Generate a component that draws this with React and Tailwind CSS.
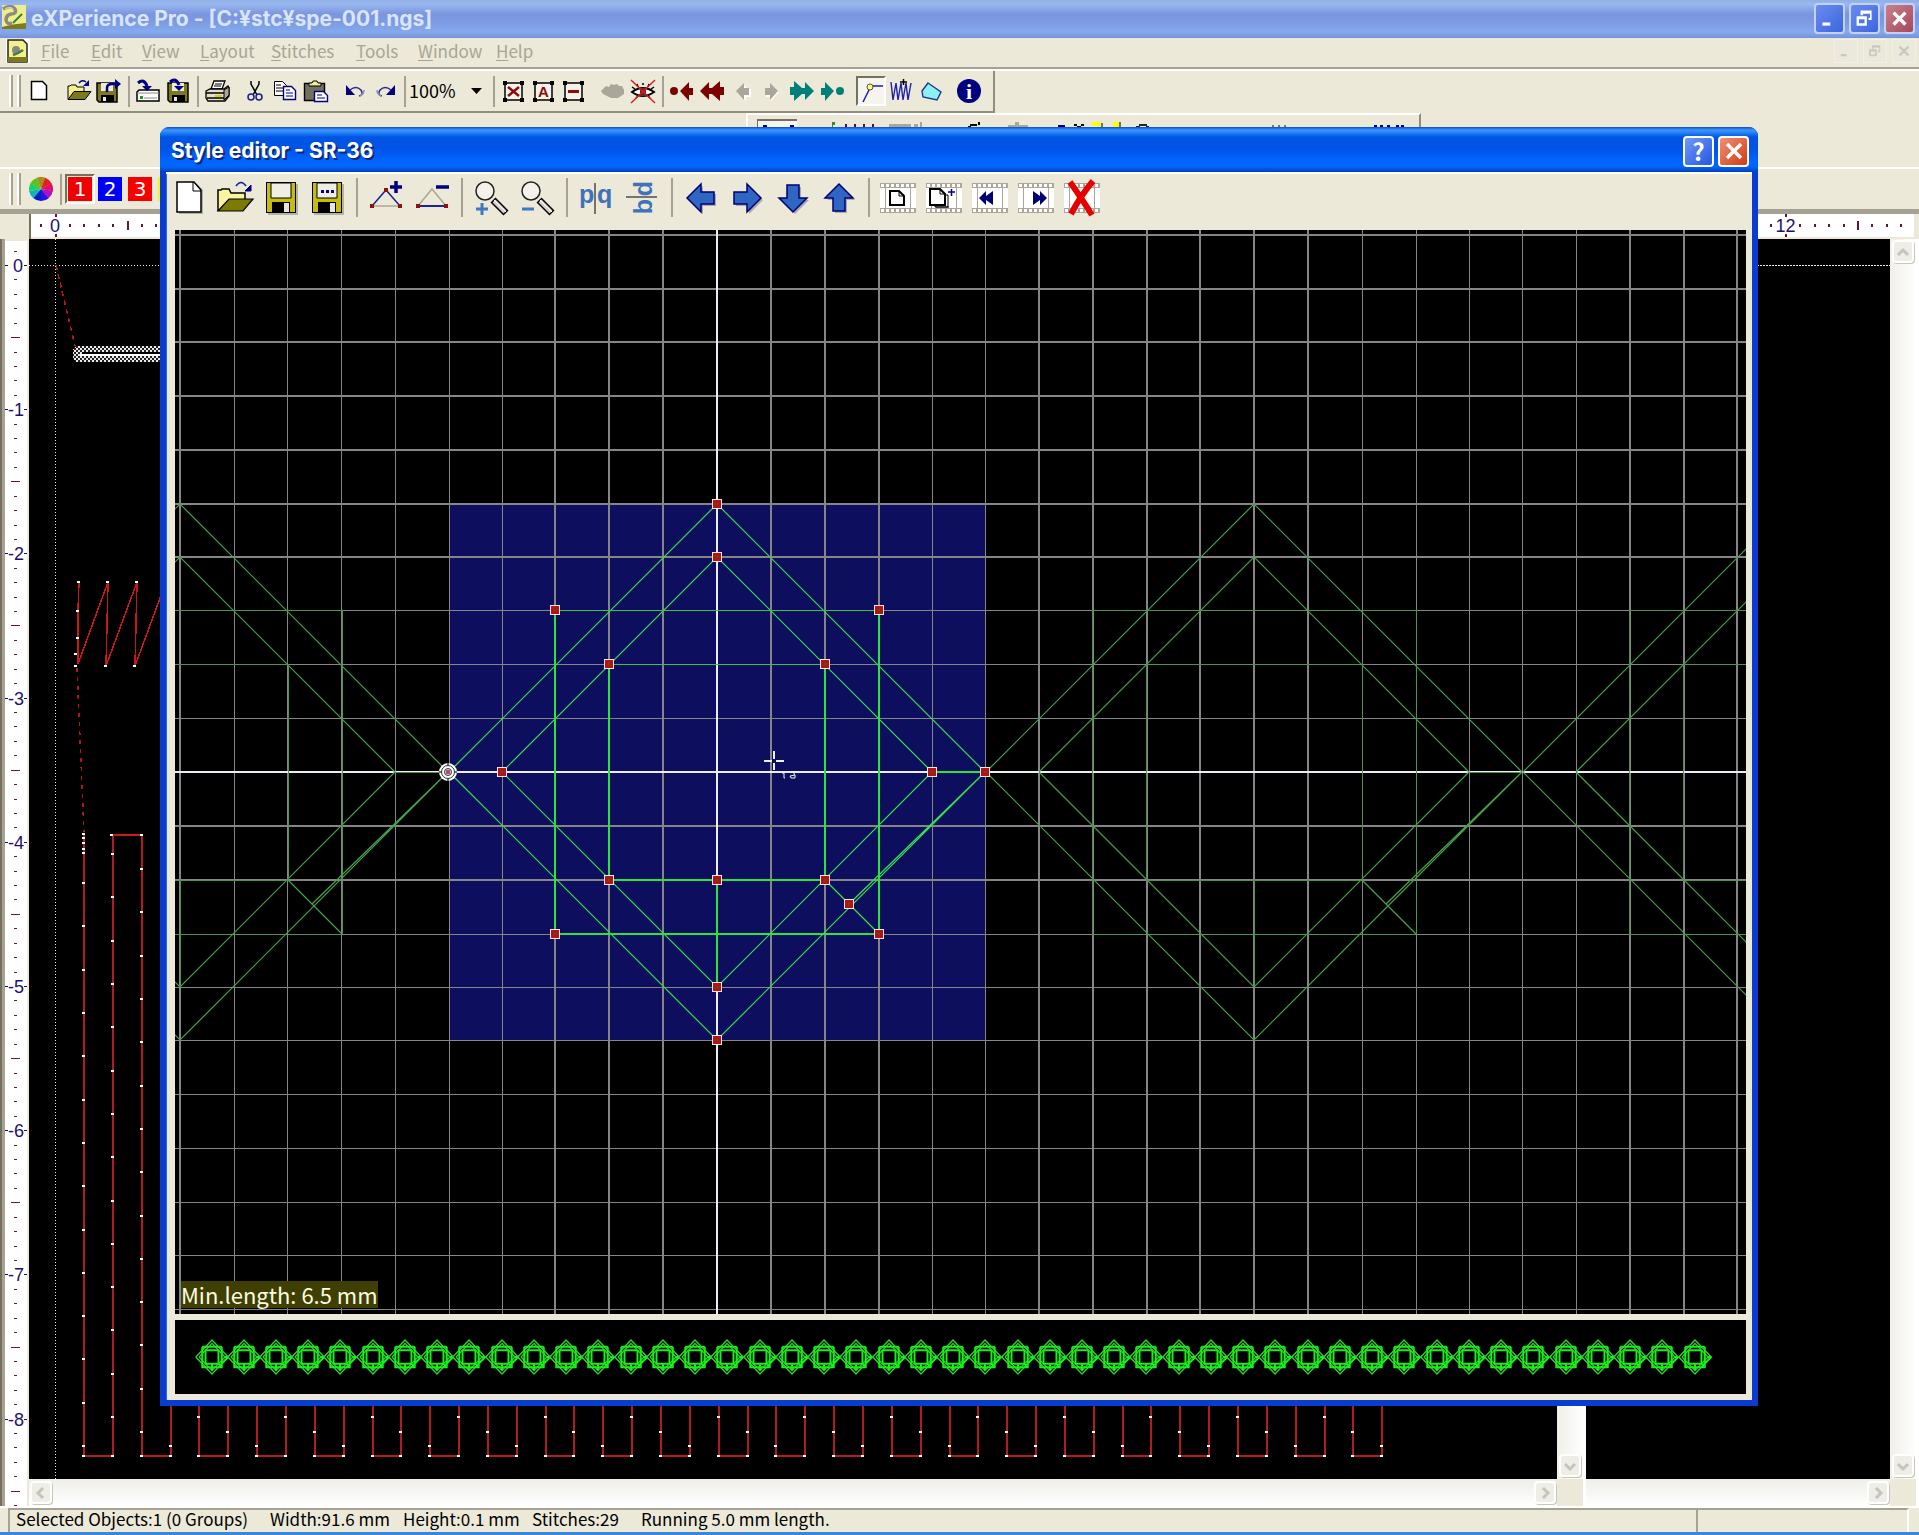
import React from "react";

const UI = "font-['Noto_Sans_CJK_JP','Noto_Sans',sans-serif]";

/* ---------- main toolbar icons (30 x 30 boxes) ---------- */

function Ico({ children }) {
  return (
    <svg viewBox="0 0 30 30" className="h-[30px] w-[30px]" fill="none" aria-hidden="true">
      {children}
    </svg>
  );
}

const Floppy = ({ y = 7 }) => (
  <g>
    <path d={`M3 ${y}h20v19h-18l-2-2z`} fill="#7c7a1c" stroke="#000" strokeWidth="1.5" />
    <path d={`M7 ${y}h12v8h-12z`} fill="#eceadf" />
    <path d={`M7 ${y + 12}h13v7h-13z`} fill="#000" />
    <path d={`M9 ${y + 14}h3v4h-3z`} fill="#e8e8e8" />
  </g>
);

const HandleBox = ({ children }) => (
  <g>
    <path d="M7 7h17v17h-17z" fill="#f6f2ea" stroke="#000" strokeWidth="1.5" />
    <path d="M5 5h4v4h-4zM22 5h4v4h-4zM5 22h4v4h-4zM22 22h4v4h-4z" fill="#000" />
    {children}
  </g>
);

const mainIcons = {
  New: <path d="M7.5 5.5h11l4 4v14h-15z" fill="#fff" stroke="#000" strokeWidth="1.5" />,
  Open: (
    <g>
      <path d="M4 23V10h2l1-1h5l1 2h7v4" fill="#f4f08a" stroke="#000" strokeWidth="1" />
      <path d="M4 23.500l6-8h17l-6 8z" fill="#7c7a1c" stroke="#000" strokeWidth="1" />
      <path d="M15 7q3-4 7-1" stroke="#000080" strokeWidth="1.3" />
      <path d="M25 4v6h-6z" fill="#000080" />
    </g>
  ),
  Export: (
    <g>
      <Floppy />
      <path d="M13 16v-4q0-4 5-4h3" stroke="#000080" strokeWidth="2.500" />
      <path d="M21 3l6 5-6 5z" fill="#000080" />
    </g>
  ),
  "Read from card": (
    <g>
      <path d="M4 16l2-2h20v11h-22z" fill="#fff" stroke="#000" strokeWidth="1.500" />
      <path d="M4 17h22M11 22h13" stroke="#888" />
      <path d="M7 20h3v3h-3z" fill="#1c9a1c" />
      <path d="M5 7q6-5 9 3" stroke="#000080" strokeWidth="3" />
      <path d="M9 10h10l-5 5z" fill="#000080" />
    </g>
  ),
  "Write to card": (
    <g>
      <path d="M5 7h20v19h-18l-2-2z" fill="#7c7a1c" stroke="#000" strokeWidth="1.500" />
      <path d="M9 7h12v8h-12z" fill="#eceadf" />
      <path d="M9 19h13v7h-13z" fill="#000" />
      <path d="M11 21h3v4h-3z" fill="#e8e8e8" />
      <path d="M7 6q6-5 9 3" stroke="#000080" strokeWidth="3" />
      <path d="M11 10h10l-5 5z" fill="#000080" />
    </g>
  ),
  Print: (
    <g stroke="#000" strokeWidth="1.300">
      <path d="M9 13l3-8h11l-3 8z" fill="#fff" />
      <path d="M13 8h7M12 10h7" strokeWidth="1" />
      <path d="M4 15l4-2h14l4-3 1 2v8l-4 5h-17l-2-3z" fill="#e2dfd0" />
      <path d="M4 17h18l4-4M5 22h18l3-4" />
      <path d="M13 20h7" stroke="#d8d000" strokeWidth="2" />
      <path d="M22 14l5-3v8l-5 5z" fill="#aaa79a" strokeWidth="1" />
    </g>
  ),
  Cut: (
    <g>
      <path d="M11 5v3l6 11M19 5v3l-6 11" stroke="#000" strokeWidth="1.500" />
      <circle cx="11" cy="21" r="3" stroke="#1c1c90" strokeWidth="1.500" />
      <circle cx="19" cy="21" r="3" stroke="#1c1c90" strokeWidth="1.500" />
    </g>
  ),
  Copy: (
    <g>
      <path d="M4.500 5.500h8l4 4v10h-12z" fill="#fff" stroke="#000" />
      <path d="M6 9h5M6 12h7M6 15h7" stroke="#000" />
      <path d="M13.500 10.500h8l4 4v9h-12z" fill="#fff" stroke="#000080" strokeWidth="1.400" />
      <path d="M16 14h4M16 17h7M16 20h7" stroke="#000080" />
    </g>
  ),
  Paste: (
    <g>
      <path d="M4.500 7.500h20v17h-20z" fill="#73715e" stroke="#000" strokeWidth="1.400" />
      <path d="M9 10v-3h3l1-2h4l1 2h3v3z" fill="#f0ec9a" stroke="#000" />
      <path d="M14.500 15.500h9l4 4v6h-13z" fill="#fff" stroke="#000080" strokeWidth="1.400" />
      <path d="M17 19h5M17 22h8" stroke="#000080" />
    </g>
  ),
  Undo: (
    <g>
      <path d="M6 9v10h9z" fill="#000080" />
      <path d="M10 14q6-5 11 0q3 5-2 6" stroke="#2a2a98" strokeWidth="1.500" />
      <path d="M20 20q4-2 4-6" stroke="#8f8fa8" strokeWidth="1.500" />
    </g>
  ),
  Redo: (
    <g>
      <path d="M25 9v10h-9z" fill="#000080" />
      <path d="M21 14q-6-5-11 0q-3 5 2 6" stroke="#2a2a98" strokeWidth="1.500" />
      <path d="M11 20q-4-2-4-6" stroke="#8f8fa8" strokeWidth="1.500" />
    </g>
  ),
  "Delete objects": (
    <HandleBox>
      <path d="M10 11l11 9M21 11l-11 9" stroke="#8c0c0c" strokeWidth="2.500" />
    </HandleBox>
  ),
  "Select all": (
    <HandleBox>
      <text x="15.500" y="21" textAnchor="middle" fill="#8c0c0c" className="font-['Liberation_Sans',sans-serif] text-[15px] font-bold">A</text>
    </HandleBox>
  ),
  "Deselect": (
    <HandleBox>
      <path d="M10 15.500h11" stroke="#8c0c0c" strokeWidth="3" />
    </HandleBox>
  ),
  Hide: <path d="M3 15l2-2 3-3 3 1 2-3 3 1 3-1 2 2 3 0 2 4v4l-3 2-3 2h-7l-4-2-4-2z" fill="#aaa79a" />,
  "Show all": (
    <g>
      <path d="M4 16q11-8 22 0q-11 8-22 0z" fill="#fff" stroke="#000" strokeWidth="2" />
      <path d="M4 11l3 2M9 8l1 3M15 7v2M21 8l-1 3M26 11l-3 2M8 22l2-2M22 22l-2-2" stroke="#000" strokeWidth="1.500" />
      <path d="M12 12h6v8h-6z" fill="#6a2828" />
      <path d="M3 4l24 23M27 4l-24 23" stroke="#e01818" strokeWidth="1.400" />
    </g>
  ),
  First: <path d="M3 15a4 4 0 1 0 8 0a4 4 0 1 0-8 0M13 15l9-9v6h4v7h-4v6z" fill="#7c0000" />,
  "Fast back": <path d="M3 15l9-9v6h3l8-7v6h4v8h-4v6l-8-7h-3v6z" fill="#7c0000" />,
  Back: (
    <g>
      <path d="M11 16l8-7v4h5v8h-5v4z" fill="#fff" />
      <path d="M9 15l8-8v5h5v7h-5v5z" fill="#aaa79a" />
    </g>
  ),
  Forward: (
    <g>
      <path d="M22 16l-8-7v4h-5v8h5v4z" fill="#fff" />
      <path d="M21 15l-8-8v5h-5v7h5v5z" fill="#aaa79a" />
    </g>
  ),
  "Fast forward": <path d="M27 15l-9-9v6h-3l-8-7v6h-4v8h4v6l8-7h3v6z" fill="#008078" />,
  Last: <path d="M19 15a4 4 0 1 0 8 0a4 4 0 1 0-8 0M17 15l-9-9v6h-4v7h4v6z" fill="#008078" />,
  "Edit points": (
    <g>
      <path d="M7 26l8-16M14 10h13" stroke="#1818c8" strokeWidth="1.500" />
      <circle cx="14" cy="11" r="3" fill="#ffff88" stroke="#55552a" />
    </g>
  ),
  Stitches: (
    <g>
      <path d="M5 6l2 18 3-17 2 17 3-17 2 17 3-17 2 17 3-17" stroke="#2020a8" strokeWidth="1.400" />
      <path d="M14 6h7M17.500 3v6" stroke="#000" strokeWidth="1.500" />
    </g>
  ),
  Fill: <path d="M12 7l13 9-4 8-14-3-1-6z" fill="#8ff0f4" stroke="#1a3a90" strokeWidth="1.400" />,
  Info: (
    <g>
      <circle cx="15" cy="15" r="12" fill="#000080" />
      <text x="15" y="23" textAnchor="middle" fill="#fff" className="font-['Liberation_Serif',serif] text-[22px] font-bold">i</text>
    </g>
  ),
};

const mainGroups = [
  { names: ["New"], after: "w-[10px]" },
  { names: ["Open", "Export"], after: "sep" },
  { names: ["Read from card", "Write to card"], after: "sep" },
  { names: ["Print"], after: "w-2" },
  { names: ["Cut", "Copy", "Paste"], after: "w-[10px]" },
  { names: ["Undo", "Redo"], after: "sep" },
  { zoom: true, names: [], after: "sep" },
  { names: ["Delete objects", "Select all", "Deselect"], after: "w-[10px]" },
  { names: ["Hide", "Show all"], after: "sep" },
  { names: ["First", "Fast back", "Back", "Forward", "Fast forward", "Last"], after: "w-[9px]" },
  { names: ["Edit points", "Stitches", "Fill"], after: "w-2" },
  { names: ["Info"], after: "w-2" },
];

function Grip() {
  return (
    <div className="flex h-8 gap-[4px] pl-[9px]">
      <div className="w-[4px] border-l-2 border-r-2 border-l-white border-r-[#a5a294]" />
      <div className="w-[4px] border-l-2 border-r-2 border-l-white border-r-[#a5a294]" />
    </div>
  );
}

function Sep() {
  return (
    <div className="flex w-[9px] justify-center">
      <div className="h-[31px] w-[2px] bg-[#a5a294]" />
    </div>
  );
}

function MainToolbar() {
  return (
    <div className="flex h-[42px] w-[995px] items-center border-r-2 border-b-2 border-[#8f8c80] border-t-0 border-solid">
      <Grip />
      <div className="w-[3px]" />
      {mainGroups.map((g, i) => (
        <React.Fragment key={i}>
          {g.zoom && (
            <div className="relative flex w-20 items-center">
              <select aria-label="Zoom" className={`${UI} -mt-[2px] h-8 w-full appearance-none bg-transparent text-lg leading-8 text-black`}>
                <option>100%</option>
              </select>
              <svg viewBox="0 0 11 6" className="pointer-events-none absolute right-[7px] h-[6px] w-[11px]">
                <path d="M0 0h11l-5.500 6z" fill="#000" />
              </svg>
            </div>
          )}
          {g.names.map((n) => (
            <button
              key={n}
              aria-label={n}
              className={
                n === "Edit points"
                  ? "h-[30px] w-[30px] border-2 border-t-[#73715e] border-l-[#73715e] border-r-white border-b-white bg-[#f6f4ee] [&>svg]:-m-[2px]"
                  : "h-[30px] w-[30px]"
              }
            >
              <Ico>{mainIcons[n]}</Ico>
            </button>
          ))}
          {g.after === "sep" ? <Sep /> : <div className={g.after} />}
        </React.Fragment>
      ))}
    </div>
  );
}

/* Toolbar whose upper rim shows above the dialog */
function StitchToolbar() {
  return (
    <div className="ml-[746px] h-full w-[675px] border-t-2 border-l-2 border-r-2 border-t-white border-l-white border-r-[#8f8c80]">
      <svg width="671" height="30" shapeRendering="crispEdges">
        <g transform="translate(-748 -115)">
          <path d="M757 119h40v12h-40z" fill="#f6f4ee" />
          <path d="M757 119h40v2h-39v10h-1z" fill="#73715e" />
          <path d="M763 125h4v3h-4zM790 125h4v3h-4zM1058 125h7v3h-7z" fill="#000080" />
          <path d="M832 122h3v3h-2v4h-1z" fill="#3a8a1a" />
          <path d="M845 124h2v4h-2zM854 124h2v4h-2zM863 124h2v4h-2zM872 124h2v4h-2z" fill="#600060" />
          <path d="M889 124h22v4h-22zM914 124h4v4h-4zM920 122h2v6h-2zM1008 125h20v3h-20zM1015 122h4v4h-4z" fill="#aaa79a" />
          <path d="M970 124h7v2h-7zM968 126h3v2h-3zM978 122h2v3h-2zM1074 124h3v2h-3zM1081 124h3v2h-3zM1077 126h4v2h-4z" fill="#000" />
          <path d="M1092 122h9v4h-9zM1113 122h6v5h-6z" fill="#ff0" />
          <path d="M1101 123h2v5h-2zM1119 122h2v6h-2z" fill="#73715e" />
          <path d="M1139 124h8v2h-8zM1136 126h4v2h-4zM1146 126h3v2h-3z" fill="#223" />
          <path d="M1272 125h2v3h-2zM1278 125h2v3h-2zM1284 125h2v3h-2z" fill="#777" />
          <path d="M1374 125h3v3h-3zM1380 125h3v3h-3zM1387 125h3v3h-3zM1396 125h3v3h-3zM1401 125h3v3h-3z" fill="#0000a0" />
        </g>
      </svg>
    </div>
  );
}

function ColorWheel() {
  const colors = ["#b08818", "#e02020", "#e0106a", "#b010c0", "#3010e0", "#0020c0", "#10b0c0", "#20d060", "#60c020"];
  return (
    <svg viewBox="-12 -12 24 24" className="h-6 w-6" aria-hidden="true">
      {colors.map((c, i) => {
        const a = ((i * 40 - 110) * Math.PI) / 180;
        const b = ((i * 40 - 69) * Math.PI) / 180;
        return (
          <path
            key={c}
            fill={c}
            d={`M0 0L${12 * Math.cos(a)} ${12 * Math.sin(a)}A12 12 0 0 1 ${12 * Math.cos(b)} ${12 * Math.sin(b)}Z`}
          />
        );
      })}
    </svg>
  );
}

function ColorToolbar() {
  const digit = "flex h-6 w-6 items-center justify-center font-['DejaVu_Sans',sans-serif] text-xl leading-6 text-white";
  return (
    <div className="flex h-[42px] items-center border-t-2 border-white">
      <Grip />
      <div className="w-2" />
      <button aria-label="Colors" className="flex w-6">
        <ColorWheel />
      </button>
      <div className="w-[3px]" />
      <Sep />
      <button className="mr-[3px] border-2 border-t-[#73715e] border-l-[#73715e] border-r-white border-b-white p-px">
        <span className={`${digit} bg-[#f00000]`}>1</span>
      </button>
      <button className={`${digit} mr-[6px] bg-[#0000f8]`}>2</button>
      <button className={`${digit} mr-[6px] bg-[#f80000]`}>3</button>
      <button className={`${digit} bg-[#f8f800]`}>4</button>
    </div>
  );
}

/* ---------- document window ---------- */

const STEP = 144.2;

function HRuler() {
  const ticks = [];
  for (let i = -1; i < 130; i++) ticks.push(i);
  return (
    <svg className="h-[23px] w-full bg-white" shapeRendering="crispEdges">
      {ticks.map((i) => {
        const x = Math.round(24.5 + (i * STEP) / 10);
        if (i % 10 === 0) return <path key={i} d={`M${x} 0v3M${x} 20v3`} stroke="#701030" strokeWidth="2" />;
        return <path key={i} d={i % 5 === 0 ? `M${x} 7v9` : `M${x} 10v3`} stroke="#601838" strokeWidth="2" />;
      })}
      {Array.from({ length: 13 }, (_, n) => (
        <text key={n} x={24 + n * STEP} y="18" textAnchor="middle" fill="#20106c" className="font-['Liberation_Sans',sans-serif] text-lg">
          {n}
        </text>
      ))}
    </svg>
  );
}

function VRuler() {
  const ticks = [];
  for (let i = -1; i < 87; i++) ticks.push(i);
  return (
    <svg className="absolute inset-0 h-full w-full bg-white" shapeRendering="crispEdges">
      {ticks.map((i) => {
        const y = Math.round(24 + (i * STEP) / 10);
        if (i % 10 === 0) return <path key={i} d={`M0 ${y}h3M19 ${y}h3`} stroke="#20106c" strokeWidth="1" />;
        return <path key={i} d={i % 5 === 0 ? `M6 ${y + 0.5}h9` : `M9 ${y + 0.5}h3`} stroke="#601838" />;
      })}
      {Array.from({ length: 9 }, (_, n) => (
        <text key={n} x={n ? 11 : 13} y={31 + n * STEP} textAnchor="middle" fill="#20106c" className="font-['Liberation_Sans',sans-serif] text-lg">
          {n ? `-${n}` : "0"}
        </text>
      ))}
    </svg>
  );
}

const arrowPaths = {
  up: "M6 14l5-5 5 5",
  down: "M6 9l5 5 5-5",
  left: "M13 6l-5 5 5 5",
  right: "M9 6l5 5-5 5",
};

function ScrollButton({ dir }) {
  return (
    <button aria-label={`Scroll ${dir}`} className="h-[23px] w-[22px] shrink-0 rounded-sm border-2 border-white bg-[#eeede6] shadow-[1px_1px_0_#c9c7ba]">
      <svg viewBox="0 0 22 22" className="-m-[2px] h-[22px] w-[22px]" fill="none">
        <path d={arrowPaths[dir]} stroke="#c6c4bb" strokeWidth="3" />
      </svg>
    </button>
  );
}

function Pane({ className, children, secondary }) {
  return (
    <div className={`flex flex-col ${className}`}>
      <div className="flex flex-1">
        <div className="relative flex-1 overflow-hidden bg-black">{children}</div>
        <div className="flex w-[29px] flex-col justify-between border-r-[3px] border-white bg-[linear-gradient(90deg,#f0efe9,#fff)] pt-px pb-[2px] pl-[2px]">
          <ScrollButton dir="up" />
          <ScrollButton dir="down" />
        </div>
      </div>
      <div className="flex h-[27px]">
        <div className="flex flex-1 items-start justify-between bg-[linear-gradient(180deg,#efeee8,#fff)] px-[1px] pt-[2px]">
          {secondary ? <span /> : <ScrollButton dir="left" />}
          <ScrollButton dir="right" />
        </div>
        <div className="w-[29px] border-r-[3px] border-white bg-[#ece9d8]" />
      </div>
    </div>
  );
}

const PHASE = [1446, 1417, 1432];

function Embroidery() {
  const cols = Array.from({ length: 46 }, (_, n) => ({
    n,
    x: Math.round(84 + n * 28.85),
    top: n === 0 || n === 1 || n === 2 ? 835 : 1390,
  }));
  const dots = [];
  cols.forEach(({ n, x, top }) => {
    for (let k = 0; k < 14; k++) {
      const y = Math.round(PHASE[n % 3] - k * 43.3);
      if (y > top + 12) dots.push([x, y]);
    }
    dots.push([x, 1456]);
  });
  [[84, 834], [84, 838], [84, 843], [84, 849], [84, 853], [112, 835], [142, 835]].forEach((d) => dots.push(d));
  [[79, 582], [108, 582], [137, 582], [78, 611], [78, 638], [76, 654], [76, 666], [106, 666], [135, 666]].forEach((d) => dots.push(d));
  return (
    <svg className="absolute inset-0 h-full w-full" fill="none" shapeRendering="crispEdges">
      <defs>
        <pattern id="checker" width="4" height="4" patternUnits="userSpaceOnUse">
          <rect width="4" height="4" fill="#222" />
          <path d="M0 0h2v2h-2zM2 2h2v2h-2z" fill="#e8e8e8" />
        </pattern>
      </defs>
      <g transform="translate(-29 -239)">
        <path d="M55.500 239V1479" stroke="#e8e8e8" strokeDasharray="1 2" />
        <path d="M29 265.500H1600" stroke="#e8e8e8" strokeDasharray="1 2" />
        <path d="M56 265L75 346" stroke="#b01818" strokeWidth="1.500" strokeDasharray="5 4" />
        <path d="M76 346H200V362H76L73 358V350Z" fill="url(#checker)" />
        <path d="M82 353H200" stroke="#000" strokeWidth="3" />
        <path d="M80 354.500H200" stroke="#fff" strokeWidth="2" />
        <path d="M79 582L78 611V664L108 582L106 666L137 582L135 666L166 582" stroke="#c81818" strokeWidth="1.500" />
        <path d="M77 668L84 832" stroke="#b01818" strokeWidth="1.500" strokeDasharray="4 5" />
        {cols.map(({ n, x, top }) => (
          <path
            key={n}
            d={`M${x} ${top}V1456${n % 2 === 0 ? `H${Math.round(84 + (n + 1) * 28.85)}` : ""}`}
            stroke="#b01c20"
            strokeWidth="2"
          />
        ))}
        <path d="M112 835H142" stroke="#d01818" strokeWidth="2" />
        {dots.map(([x, y], i) => (
          <path key={i} d={`M${x - 2} ${y - 1}h3v2h-3z`} fill="#fff" />
        ))}
      </g>
    </svg>
  );
}

function DocumentWindow() {
  return (
    <main className="flex flex-1 flex-col border-t-[5px] border-[#a5a294]">
      <div className="flex h-[25px]">
        <div className="ml-[2px] w-[29px] border-r-2 border-[#73715e] bg-[#ece9d8]" />
        <div className="flex-1 pr-[5px]">
          <HRuler />
        </div>
      </div>
      <div className="flex flex-1">
        <div className="flex w-[29px] border-l-2 border-[#73715e] bg-[#ece9d8]">
          <div className="w-[3px] bg-[#a5a294]" />
          <div className="relative mt-[2px] w-[22px]">
            <VRuler />
          </div>
        </div>
        <Pane className="flex-1">
          <Embroidery />
        </Pane>
        <Pane className="w-[333px]" secondary>
          <svg className="absolute inset-0 h-full w-full" shapeRendering="crispEdges">
            <path d="M0 26.500H400" stroke="#e8e8e8" strokeDasharray="2 1" />
          </svg>
        </Pane>
      </div>
    </main>
  );
}

/* ---------- style editor ---------- */

const CX = 717;
const CY = 772;
const SNAP = [0, 54, 108, 162, 215, 268.6];

/* distance of a grid coordinate from the centre, snapped to whole pixels */
function offset(u) {
  const a = Math.abs(u);
  const block = Math.floor(a / 5);
  const rest = a - block * 5;
  const i = Math.floor(rest);
  const d = block * 268.6 + SNAP[i] + (rest - i) * (SNAP[i + 1] - SNAP[i]);
  return Math.sign(u) * Math.floor(d);
}
const gx = (u) => CX + offset(u);
const gy = (u) => CY + offset(u);
const poly = (pts) => "M" + pts.map(([a, b]) => `${gx(a)} ${gy(b)}`).join("L");

const DIAGONALS = [
  [[-5, 0], [0, -5], [5, 0], [0, 5], [-5, 0]],
  [[-4, 0], [0, -4], [4, 0], [0, 4], [-4, 0]],
  [[2, 2], [3, 3]],
  [[2.45, 2.45], [5, 0]],
];
const THIN = [
  [[-3, -3], [3, -3]],
  [[-2, -2], [2, -2]],
];
const THICK = [
  [[-3, -3], [-3, 3], [3, 3], [3, -3]],
  [[-2, -2], [-2, 2], [2, 2], [2, -2]],
  [[0, 2], [0, 4]],
  [[4, 0], [5, 0]],
];
const NODES = [
  [0, -5], [0, -4], [-3, -3], [3, -3], [-2, -2], [2, -2], [-4, 0], [4, 0], [5, 0],
  [-2, 2], [0, 2], [2, 2], [2.45, 2.45], [-3, 3], [3, 3], [0, 4], [0, 5],
];
const V_THICK = [-10, -3, -2, -1, 1, 2, 3, 6, 7, 8, 9, 10, 11, 17, 18, 19];
const H_THICK = [-10, -9, -8, -7, -6, -5, -4, 1, 2];

function Motif({ bright }) {
  return (
    <g>
      <path d={DIAGONALS.map(poly).join("")} stroke={bright ? "#38e04c" : "#48a04c"} strokeWidth="1.200" shapeRendering="auto" />
      <path d={THIN.map(poly).join("")} stroke={bright ? "#38c050" : "#48984c"} strokeWidth="1" />
      <path d={THICK.map(poly).join("")} stroke={bright ? "#28e43c" : "#48984c"} strokeWidth={bright ? 2 : 1} />
    </g>
  );
}

function StyleCanvas() {
  const vs = Array.from({ length: 30 }, (_, i) => i - 10);
  const hs = Array.from({ length: 21 }, (_, i) => i - 10);
  return (
    <svg viewBox="175 230 1571 1084" preserveAspectRatio="xMidYMid slice" className="absolute inset-0 h-full w-full" fill="none" shapeRendering="crispEdges">
      <rect x={gx(-5)} y={gy(-5)} width={gx(5) - gx(-5)} height={gy(5) - gy(-5)} fill="#0e0e5e" />
      {vs.map((i) => (
        <path key={i} d={`M${gx(i)} 230V1314`} stroke="#858585" strokeWidth={V_THICK.includes(i) ? 2 : 1} />
      ))}
      {hs.map((i) => (
        <path key={i} d={`M175 ${gy(i)}H1746`} stroke="#858585" strokeWidth={H_THICK.includes(i) ? 2 : 1} />
      ))}
      <path d="M717 230V1314M175 772H1746" stroke="#ececf4" strokeWidth="2" />
      {[-537, 537, 1074].map((k) => (
        <g key={k} transform={`translate(${k} 0)`}>
          <Motif />
        </g>
      ))}
      <Motif bright />
      {NODES.map(([a, b]) => (
        <g key={`${a},${b}`} transform={`translate(${gx(a)} ${gy(b)})`}>
          <path d="M-5-5h10v10h-10z" fill="#f4e4e4" />
          <path d="M-4-4h8v8h-8z" fill="#b01414" />
          <path d="M-1-1h2v2h-2z" fill="#4a5a10" />
        </g>
      ))}
      <g transform="translate(448 772)" shapeRendering="auto">
        <circle r="9" fill="#fff" />
        <circle r="6.500" stroke="#303030" strokeWidth="1" />
        <circle r="3.500" stroke="#303030" strokeWidth="1" fill="#e8e8e8" />
        <path d="M-9 0h3M6 0h3M0-9v3M0 6v3" stroke="#404040" strokeWidth="1.500" />
        <path d="M-2-2h4v4h-4z" fill="#b05068" />
      </g>
      <path d="M774 751v8M774 763v7M764 761h8M776 761h8" stroke="#f0f0f0" strokeWidth="1.500" />
      <path d="M782 773h2v5h1M788 772h5l2 3v3h-4l-1-2 5-1" stroke="#f0f0f0" strokeWidth="1" shapeRendering="auto" />
    </svg>
  );
}

function StitchPreview() {
  const u = 3.24;
  const p = (pts) => "M" + pts.map(([a, b]) => `${a * u} ${b * u * 1.05}`).join("L");
  return (
    <svg viewBox="175 1320 1571 74" preserveAspectRatio="xMidYMid slice" className="absolute inset-0 h-full w-full" fill="none">
      {Array.from({ length: 47 }, (_, i) => (
        <g key={i} transform={`translate(${Math.round(211.5 + i * 32.24)} 1357)`}>
          <path d={[DIAGONALS[0], DIAGONALS[1]].map(p).join("")} stroke="#30d030" strokeWidth="1.400" />
          <path d={[...THIN, ...THICK, ...DIAGONALS.slice(2)].map(p).join("")} stroke="#18ee18" strokeWidth="2" />
        </g>
      ))}
    </svg>
  );
}

const BigFloppy = ({ children }) => (
  <g>
    <path d="M-13-14h30v31h-30z" fill="#b5b2a4" />
    <path d="M-15-16h30v31h-30z" fill="#000" />
    <path d="M-14-15h28v29h-28z" fill="#c4bc10" />
    <path d="M-10-15h20v15h-20z" fill="#f0ede2" stroke="#000" />
    <path d="M-9 4h18v11h-18z" fill="#000" />
    <path d="M3 5h5v9h-5z" fill="#e8e5d8" />
    {children}
  </g>
);

const Magnifier = ({ children }) => (
  <g>
    <path d="M2 2l13 13" stroke="#000" strokeWidth="7" />
    <path d="M3 3l11 11" stroke="#d4d2cc" strokeWidth="4" />
    <path d="M3 2l12 12" stroke="#fff" strokeWidth="1" />
    <circle cx="-6" cy="-7" r="9" fill="#f4f2ea" stroke="#222" strokeWidth="1.500" />
    {children}
  </g>
);

const BlockArrow = ({ d }) => (
  <g>
    <path d={d} fill="#a9a8b4" transform="translate(2 2)" />
    <path d={d} fill="#2f66c4" stroke="#000070" strokeWidth="1.500" />
  </g>
);

const Film = ({ children }) => (
  <g>
    <path d="M-18-15h36v30h-36z" fill="#aaa79a" />
    <path d="M-17-12.500h35M-17 12.500h35" stroke="#fff" strokeWidth="3" strokeDasharray="3 2" />
    <path d="M-18-10h5v20h-5zM-12-10h24v20h-24zM13-10h5v20h-5z" fill="#fff" />
    {children}
  </g>
);

const Rewind = ({ flip }) => (
  <path d="M-11 0l7-7v5l7-5v14l-7-5v5z" fill="#000070" transform={flip ? "scale(-1 1)" : undefined} />
);

const pq = "font-['Liberation_Sans',sans-serif] text-[25px] font-bold";

const styleIcons = {
  "New style": (
    <g>
      <path d="M-10-14h18l6 6v24h-24z" fill="#b5b2a4" />
      <path d="M-12-16h17l7 8v22h-24z" fill="#fff" stroke="#000" strokeWidth="1.500" />
      <path d="M4-16v9h8" stroke="#000" />
    </g>
  ),
  "Open style": (
    <g>
      <path d="M-17 13v-21h3l1-1h7l2 4h14v8" fill="#f8f4a0" stroke="#000" strokeWidth="1.500" />
      <path d="M-17 13l11-12h24l-10 12z" fill="#7c7a00" stroke="#000" strokeWidth="1.200" />
      <path d="M1-12q5-7 10 0" stroke="#1020a0" strokeWidth="1.500" />
      <path d="M16-13v6h-6z" fill="#000080" stroke="#000080" />
    </g>
  ),
  "Save style": <BigFloppy />,
  "Save style as": (
    <BigFloppy>
      <path d="M-6-8h3v3h-3zM-1-8h3v3h-3zM4-8h3v3h-3z" fill="#000080" />
    </BigFloppy>
  ),
  "Add point": (
    <g>
      <path d="M-14 8h28" stroke="#aaa79a" strokeWidth="1.500" />
      <path d="M-14 8l14-16 14 16" stroke="#1c2490" strokeWidth="1.500" />
      <path d="M-16 6h4v4h-4zM12 6h4v4h-4zM-2-10h4v4h-4z" fill="#90100c" />
      <path d="M4-11h12M10-17v12" stroke="#000080" strokeWidth="3.500" />
    </g>
  ),
  "Remove point": (
    <g>
      <path d="M-14 8l14-17 14 17" stroke="#aaa79a" strokeWidth="1.500" />
      <path d="M-14 8h28" stroke="#1c2490" strokeWidth="2" />
      <path d="M-16 6h4v4h-4zM12 6h4v4h-4z" fill="#90100c" />
      <path d="M4-11h13" stroke="#000080" strokeWidth="3.500" />
    </g>
  ),
  "Zoom in": (
    <Magnifier>
      <path d="M-15 11h12M-9 5v12" stroke="#4078c0" strokeWidth="3" />
    </Magnifier>
  ),
  "Zoom out": (
    <Magnifier>
      <path d="M-15 11h12" stroke="#4078c0" strokeWidth="3" />
    </Magnifier>
  ),
  "Mirror horizontally": (
    <g fill="#3f72b8">
      <text x="-17" y="5" className={pq}>p</text>
      <text x="1" y="5" className={pq}>q</text>
      <path d="M-1-15v31" stroke="#000" />
    </g>
  ),
  "Mirror vertically": (
    <g fill="#3f72b8">
      <g transform="rotate(90)">
        <text x="-17" y="4" className={pq}>p</text>
        <text x="1" y="4" className={pq}>q</text>
      </g>
      <path d="M-16-1h31" stroke="#000" />
    </g>
  ),
  "Move left": <BlockArrow d="M-14 0l14-14v8h13v12h-13v8z" />,
  "Move right": <BlockArrow d="M14 0l-14-14v8h-13v12h13v8z" />,
  "Move down": <BlockArrow d="M0 14l-14-14h8v-13h12v13h8z" />,
  "Move up": <BlockArrow d="M0-14l-14 14h8v13h12v-13h8z" />,
  "New frame": (
    <Film>
      <path d="M-8-7h9l5 5v9h-14z" fill="#fff" stroke="#000" strokeWidth="2" />
      <path d="M1-7v5h5" stroke="#000" />
    </Film>
  ),
  "Insert frame": (
    <Film>
      <path d="M-11-4v13h13" stroke="#000" transform="translate(3 0)" />
      <path d="M-14-9h10l5 5v11h-15z" fill="#fff" stroke="#000" strokeWidth="2" />
      <path d="M-4-9v5h5M1-3h3v12h-13v-2" stroke="#000" />
      <path d="M4-6h7M7.500-9v7" stroke="#000090" strokeWidth="1.500" />
    </Film>
  ),
  "Previous frame": <Film><Rewind /></Film>,
  "Next frame": <Film><Rewind flip /></Film>,
  "Delete frame": (
    <Film>
      <path d="M-12-16q10 14 22 33M11-17q-12 14-22 33" stroke="#e80000" strokeWidth="6" />
    </Film>
  ),
};

const styleGroups = [
  ["New style", "Open style", "Save style", "Save style as"],
  ["Add point", "Remove point"],
  ["Zoom in", "Zoom out"],
  ["Mirror horizontally", "Mirror vertically"],
  ["Move left", "Move right", "Move down", "Move up"],
  ["New frame", "Insert frame", "Previous frame", "Next frame", "Delete frame"],
];

function StyleEditor() {
  return (
    <section
      aria-label="Style editor"
      className="absolute top-[127px] right-[161px] bottom-[129px] left-[160px] flex flex-col rounded-t-[9px] border-x-[6px] border-b-[6px] border-[#0a3cd0] bg-[#ece9d8] shadow-[inset_1px_0_0_#2a6af0]"
    >
      <div className="-mx-[6px] flex h-[45px] shrink-0 items-center rounded-t-[9px] bg-[linear-gradient(180deg,#0a4fc4_0,#3f96ff_3px,#2080f8_6px,#0054e3_10px,#0053e6_22px,#0066ff_34px,#0064fa_40px,#0040b8_45px)] pt-[3px] pr-[9px] pl-[11px]">
        <h2 className="flex-1 font-['Inter',sans-serif] text-[21px] leading-6 font-bold text-white [text-shadow:2px_2px_0_#0a2a80]">Style editor - SR-36</h2>
        <button aria-label="Help" className={`${UI} mr-1 flex h-[31px] w-[31px] items-center justify-center rounded border-2 border-white bg-[linear-gradient(135deg,#6f98f8,#2458e0)] text-2xl leading-none font-bold text-white`}>
          ?
        </button>
        <button aria-label="Close" className="flex h-[31px] w-[31px] items-center justify-center rounded border-2 border-white bg-[linear-gradient(135deg,#f09078,#d03c10)]">
          <svg viewBox="0 0 18 18" className="h-[18px] w-[18px]">
            <path d="M2 2l14 14M16 2l-14 14" stroke="#fff" strokeWidth="3.500" />
          </svg>
        </button>
      </div>
      <div className="flex h-[58px] shrink-0 items-center border-t-2 border-white pb-[9px]">
        {styleGroups.map((names, i) => (
          <React.Fragment key={i}>
            {i > 0 && (
              <div className="flex w-[13px] justify-center">
                <div className="h-[39px] w-[2px] bg-[#a5a294]" />
              </div>
            )}
            {names.map((n) => (
              <button key={n} aria-label={n} className="h-10 w-[46px]">
                <svg viewBox="-23 -20 46 40" className="h-10 w-[46px]" fill="none" aria-hidden="true">
                  {styleIcons[n]}
                </svg>
              </button>
            ))}
          </React.Fragment>
        ))}
      </div>
      <div className="flex flex-1 flex-col gap-[6px] pr-[6px] pb-[6px] pl-[9px]">
        <div className="relative flex flex-1 items-end overflow-hidden bg-black">
          <StyleCanvas />
          <p className={`${UI} relative mb-[6px] ml-[6px] bg-[#3f3f04] text-[22px] leading-[27px] text-[#fcfce0]`}>Min.length: 6.5 mm</p>
        </div>
        <div className="relative h-[74px] overflow-hidden bg-black">
          <StitchPreview />
        </div>
      </div>
    </section>
  );
}

/* ---------- frame of the application ---------- */

function AppIcon({ className, page }) {
  return (
    <svg viewBox="0 0 24 24" className={className} aria-hidden="true">
      <path d="M0 0h24v24h-24z" fill={page ? "#fff" : "#f0ee8c"} />
      {page ? (
        <g>
          <path d="M2 1h15l4 4v18h-19z" fill="#f4f08a" stroke="#222" strokeWidth="1.500" />
          <path d="M2 18h19v5h-19z" fill="#7c7a1c" />
          <circle cx="10" cy="11" r="4" fill="#888" />
          <path d="M7 16q6-2 10-5" stroke="#4a7a50" strokeWidth="2.500" fill="none" />
        </g>
      ) : (
        <g fill="none">
          <path d="M0 22q10-3 24-4v6h-24z" fill="#7c7a1c" />
          <path d="M1 4q8-5 12 0q2 5-4 5q-5 1-5 6q1 5 6 3" stroke="#8a8a80" strokeWidth="3.500" />
          <path d="M3 4q5-3 8 0" stroke="#c8c8c0" strokeWidth="1.500" />
          <path d="M11 18l9-9" stroke="#2a8a3a" strokeWidth="2" />
        </g>
      )}
    </svg>
  );
}

const menus = [
  ["File", "ml-[11px] w-[50px]"],
  ["Edit", "w-[51px]"],
  ["View", "w-[58px]"],
  ["Layout", "w-[71px]"],
  ["Stitches", "w-[85px]"],
  ["Tools", "w-[62px]"],
  ["Window", "w-[78px]"],
  ["Help", "w-[51px]"],
];

const windowGlyphs = {
  Minimize: <path d="M3 17h10v4h-10z" />,
  Restore: <path d="M7 2h14v12h-4v-3h2v-5h-9v2h-3zM2 9h13v12h-13zM5 13v5h7v-5z" fillRule="evenodd" />,
  Close: <path d="M3 6l3-3 6 6 6-6 3 3-6 6 6 6-3 3-6-6-6 6-3-3 6-6z" />,
};

const titleButtonColors = {
  Minimize: "bg-[linear-gradient(135deg,#6a8cf0,#3c66dc)]",
  Restore: "bg-[linear-gradient(135deg,#6a8cf0,#3c66dc)]",
  Close: "bg-[linear-gradient(135deg,#c8808c,#a8485c)]",
};

const statusItems = [
  ["Selected Objects:1 (0 Groups)", "w-[254px]"],
  ["Width:91.6 mm", "w-[133px]"],
  ["Height:0.1 mm", "w-[129px]"],
  ["Stitches:29", "w-[109px]"],
  ["Running 5.0 mm length.", ""],
];

export default function App() {
  return (
    <div className={`${UI} relative flex min-h-screen flex-col overflow-hidden bg-[#ece9d8]`}>
      <header className="flex h-[38px] items-center bg-[linear-gradient(180deg,#8fb0e8_0,#98b8ee_4px,#7b96df_14px,#7c98e0_20px,#84aaec_32px,#7690da_38px)] pr-1 pb-px pl-[2px]">
        <AppIcon className="mb-1 h-6 w-6" />
        <h1 className="flex-1 pl-[5px] font-['Inter',sans-serif] text-[21px] leading-6 font-bold text-[#d9e5fa]">eXPerience Pro - [C:¥stc¥spe-001.ngs]</h1>
        <div className="flex gap-[4px]">
          {["Minimize", "Restore", "Close"].map((n) => (
            <button key={n} aria-label={n} className={`flex h-[31px] w-[31px] items-center justify-center rounded border-2 border-[#c4d2f8] ${titleButtonColors[n]}`}>
              <svg viewBox="0 0 24 24" className="h-[19px] w-[19px]" fill="#fff">
                {windowGlyphs[n]}
              </svg>
            </button>
          ))}
        </div>
      </header>

      <nav className="flex h-[33px] items-center border-b-2 border-white pb-[5px] pl-[6px] shadow-[inset_0_-2px_0_#a5a294]">
        <AppIcon page className="h-6 w-6" />
        {menus.map(([m, w]) => (
          <button key={m} className={`${w} text-left text-[17px] leading-6 text-[#a8a594]`}>
            <span className="underline underline-offset-2">{m[0]}</span>
            {m.slice(1)}
          </button>
        ))}
        <div className="ml-auto flex gap-[5px] pr-[3px]">
          {["Minimize", "Restore", "Close"].map((n) => (
            <button key={n} aria-label={`${n} document`} className="flex h-6 w-6 items-center justify-center border border-[#f2f0e6] bg-[#ebe9db]">
              <svg viewBox="0 0 24 24" className="h-[14px] w-[14px]" fill="#cbc9bf">
                {windowGlyphs[n]}
              </svg>
            </button>
          ))}
        </div>
      </nav>

      <MainToolbar />
      <div className="h-[54px]">
        <StitchToolbar />
      </div>
      <ColorToolbar />

      <DocumentWindow />

      <footer className="flex h-[29px] items-start border-b-[3px] border-[#3c86d8] border-t-2 border-t-white pl-2 text-[17px] leading-[18px] text-black">
        <div className="flex h-full flex-1 border-t-2 border-l-2 border-[#a5a294] pl-[6px]">
          {statusItems.map(([t, w]) => (
            <span key={t} className={`${w} whitespace-nowrap`}>{t}</span>
          ))}
        </div>
        <div className="h-full w-[213px] border-t-2 border-r-2 border-l-2 border-t-[#a5a294] border-r-white border-l-[#a5a294]" />
        <div className="w-[10px]" />
      </footer>

      <StyleEditor />
    </div>
  );
}
